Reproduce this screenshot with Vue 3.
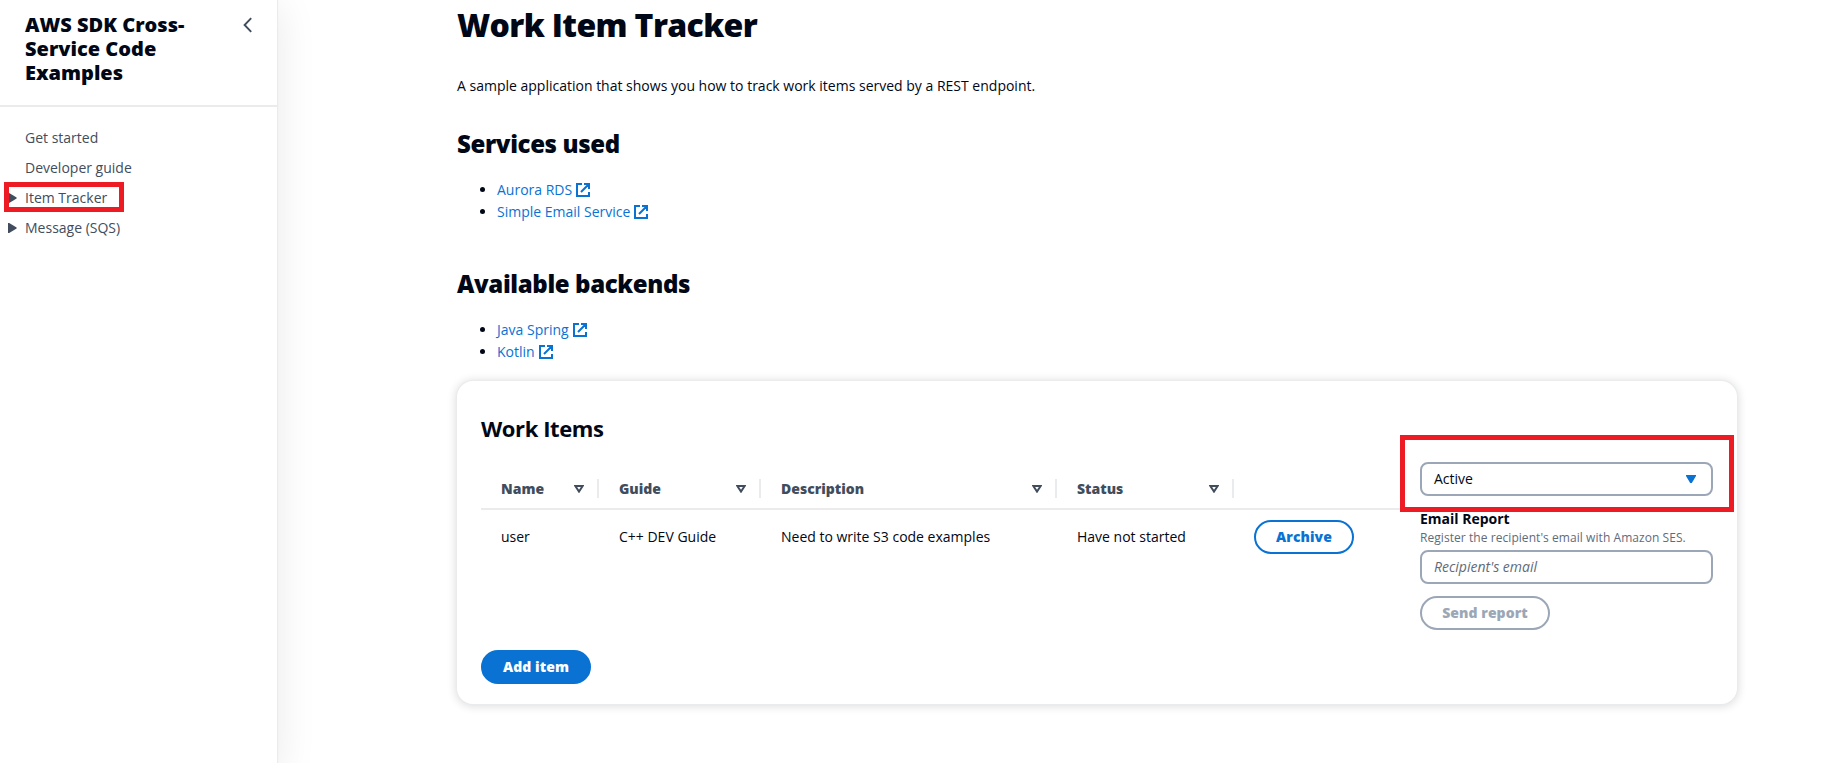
<script setup>
const nav = [
  { label: 'Get started' },
  { label: 'Developer guide' },
  { label: 'Item Tracker', arrow: true, marked: true },
  { label: 'Message (SQS)', arrow: true },
]
const sections = [
  { title: 'Services used', links: ['Aurora RDS', 'Simple Email Service'] },
  { title: 'Available backends', links: ['Java Spring', 'Kotlin'] },
]
const columns = ['Name', 'Guide', 'Description', 'Status']
const row = ['user', 'C++ DEV Guide', 'Need to write S3 code examples', 'Have not started']
</script>

<template>
  <div class="page">
    <aside class="sidebar">
      <header class="side-head">
        <h2 class="side-title">AWS SDK Cross-Service Code Examples</h2>
        <svg class="chevron" width="16" height="16" viewBox="0 0 16 16"><path d="M11.2 1.2 4.6 8l6.6 6.8" /></svg>
      </header>
      <nav class="side-nav">
        <a v-for="n in nav" :key="n.label" class="nav-item">
          <svg v-if="n.arrow" class="nav-arrow" width="9" height="10" viewBox="0 0 9 10"><path d="M0 0h1.2L8.6 4.4v1.2L1.2 10H0z" /></svg>
          <span>{{ n.label }}</span>
          <i v-if="n.marked" class="mark nav-mark"></i>
        </a>
      </nav>
    </aside>

    <main class="main">
      <h1 class="title">Work Item Tracker</h1>
      <p class="intro">A sample application that shows you how to track work items served by a REST endpoint.</p>
      <section v-for="s in sections" :key="s.title" class="section">
        <h2 class="section-title">{{ s.title }}</h2>
        <ul class="links">
          <li v-for="l in s.links" :key="l">
            <a>{{ l }}</a>
            <svg class="ext" width="14" height="14" viewBox="0 0 14 14"><path d="M6 1H1v12h12V9M8 1h5v5M13 1 5 9" /></svg>
          </li>
        </ul>
      </section>

      <div class="card">
        <div class="left">
          <h3 class="card-title">Work Items</h3>
          <div class="row head">
            <div v-for="c in columns" :key="c" class="th">
              <span>{{ c }}</span>
              <svg width="10" height="8" viewBox="0 0 10 8"><path d="M1.3 1h7.4L5 6.6z" /></svg>
            </div>
            <div></div>
          </div>
          <div class="row body">
            <div v-for="c in row" :key="c" class="td">{{ c }}</div>
            <div class="td"><button class="btn archive">Archive</button></div>
          </div>
          <button class="btn add">Add item</button>
        </div>
        <div class="right">
          <div class="field select">
            <span>Active</span>
            <svg width="10" height="8" viewBox="0 0 10 8"><path d="M0 0h10v1L5.8 8H4.2L0 1z" /></svg>
            <i class="mark select-mark"></i>
          </div>
          <div class="label">Email Report</div>
          <div class="hint">Register the recipient's email with Amazon SES.</div>
          <div class="field input">Recipient's email</div>
          <button class="btn send">Send report</button>
        </div>
      </div>
    </main>
  </div>
</template>

<style>
body { margin: 0; background: #fff; overflow: hidden; }
</style>

<style scoped>
.page { display: flex; width: 1830px; height: 763px; overflow: hidden; font: 14px/22px "Open Sans", "Noto Sans", sans-serif; color: #000716; background: #fff; }
.page * { box-sizing: border-box; }
h1, h2, h3, p, ul { margin: 0; padding: 0; }
.sidebar { width: 277px; height: 763px; flex: none; background: #fff; box-shadow: 0 0 1px 1px #e9ebed, 1px 8px 36px 3px rgba(0, 7, 22, 0.08); }
.side-head { display: flex; justify-content: space-between; height: 107px; padding: 13px 21px 0 25px; border-bottom: 2px solid #ebebeb; }
.side-title { width: 180px; font-size: 20px; line-height: 24px; font-weight: 800; }
.chevron { margin-top: 4px; fill: none; stroke: #414d5c; stroke-width: 1.9; }
.side-nav { padding-top: 16px; }
.nav-item { position: relative; display: block; height: 30px; padding-left: 25px; line-height: 30px; color: #414d5c; }
.nav-arrow { position: absolute; left: 8px; top: 10px; fill: #414d5c; }
.mark { position: absolute; border: 5px solid #ed1c24; }
.nav-mark { left: 4px; top: -1px; width: 120px; height: 30px; }
.main { width: 1280px; margin-left: 180px; }
.title { height: 50px; font-size: 32px; line-height: 50px; font-weight: 800; letter-spacing: -0.64px; }
.intro { height: 59px; margin-bottom: 19px; padding-top: 25px; }
.section { height: 140px; }
.section-title { height: 32px; font-size: 24px; line-height: 32px; font-weight: 800; letter-spacing: -0.37px; }
.links { margin-top: 19px; padding-left: 40px; list-style: disc; }
.links a { color: #0972d3; }
.ext { margin-left: 4px; vertical-align: -2px; fill: none; stroke: #0972d3; stroke-width: 2; }
.card { display: flex; gap: 20px; height: 323px; margin-top: -27px; padding: 0 24px; border-radius: 16px; background: #fff; box-shadow: 0 0 1px 1px #e9ebed, 0 1px 8px 2px rgba(0, 7, 22, 0.12); }
.left { width: 919px; }
.card-title { height: 87px; padding-top: 35px; font-size: 22px; line-height: 24px; font-weight: 700; letter-spacing: -0.4px; }
.row { display: grid; grid-template-columns: 118px 162px 296px 177px 1fr; }
.head { height: 42px; border-bottom: 2px solid #ebebeb; font-weight: 800; color: #414d5c; }
.th { display: flex; align-items: center; justify-content: space-between; height: 19px; margin-top: 11px; padding: 0 13px 0 20px; border-right: 2px solid #e9ebed; }
.th svg { fill: none; stroke: #414d5c; stroke-width: 2; }
.body { height: 140px; padding-top: 10px; }
.td { padding-left: 20px; line-height: 34px; }
.btn { display: block; height: 34px; padding: 0; border: 2px solid; border-radius: 17px; background: #fff; font: 800 14px/28px "Open Sans", sans-serif; letter-spacing: 0.07px; text-align: center; }
.archive { width: 100px; color: #0972d3; }
.add { width: 110px; background: #0972d3; border-color: #0972d3; color: #fff; }
.right { width: 293px; padding-top: 81px; }
.field { display: flex; align-items: center; height: 34px; padding: 0 12px; border: 2px solid #9ba7b6; border-radius: 8px; }
.select { position: relative; justify-content: space-between; padding-right: 15px; }
.select svg { fill: #0972d3; }
.select-mark { left: -22px; top: -29px; width: 334px; height: 77px; }
.label { margin-top: 12px; font-weight: 700; }
.hint { height: 20px; font-size: 12px; line-height: 16px; letter-spacing: 0.06px; color: #5f6b7a; }
.input { font-style: italic; color: #5f6b7a; }
.send { width: 130px; margin-top: 12px; color: #9ba7b6; }
</style>
